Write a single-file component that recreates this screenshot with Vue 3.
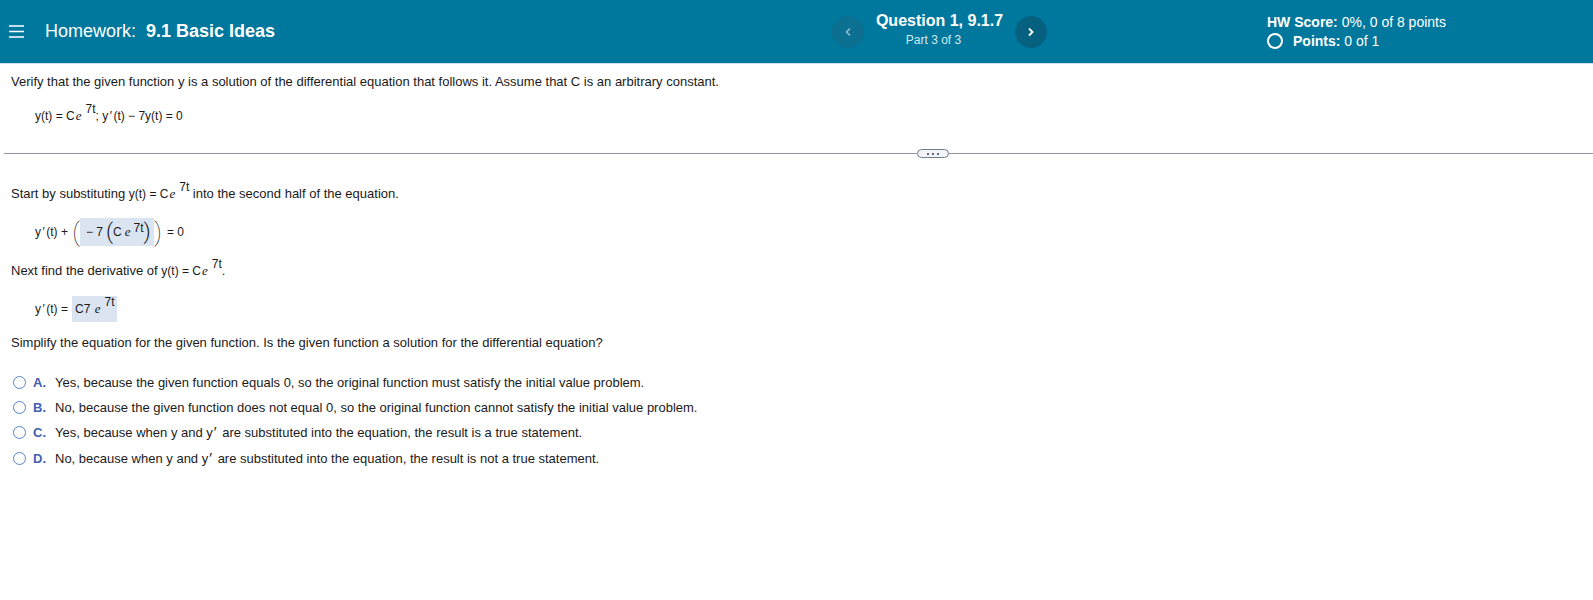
<template>
  <div class="page">
    <header class="topbar">
      <div class="left">
        <svg class="menu" width="15" height="13" viewBox="0 0 15 13">
          <path d="M0 1h15M0 6.5h15M0 12h15" stroke="#fff" stroke-width="1.4" fill="none" />
        </svg>
        <div class="hw-title">Homework: <b>9.1 Basic Ideas</b></div>
      </div>
      <div class="center">
        <button class="nav prev">
          <svg width="6" height="10" viewBox="0 0 6 10"><path d="M5 1.5L1.5 5L5 8.5" stroke="#8fbccd" stroke-width="1.6" fill="none" /></svg>
        </button>
        <div class="q-title">
          <div class="q-name">Question 1, 9.1.7</div>
          <div class="q-part">Part 3 of 3</div>
        </div>
        <button class="nav next">
          <svg width="6" height="10" viewBox="0 0 6 10"><path d="M1 1.5L4.5 5L1 8.5" stroke="#fff" stroke-width="1.8" fill="none" /></svg>
        </button>
      </div>
      <div class="score">
        <div><b>HW Score:</b> 0%, 0 of 8 points</div>
        <div class="points">
          <span class="ring"></span>
          <span><b>Points:</b> 0 of 1</span>
        </div>
      </div>
    </header>

    <section class="question">
      <p class="line first">Verify that the given function y is a solution of the differential equation that follows it. Assume that C is an arbitrary constant.</p>
      <p class="math eq1">y(t) = C<i class="e">e</i><sup>7t</sup>; y<span class="prime">′</span>(t) − 7y(t) = 0</p>
    </section>

    <div class="divider">
      <span class="rule left-rule"></span>
      <span class="pill"><i></i><i></i><i></i></span>
      <span class="rule"></span>
    </div>

    <section class="steps">
      <p class="line s1">Start by substituting <span class="m">y(t) = C<i class="e">e</i><sup>7t</sup></span> into the second half of the equation.</p>
      <div class="math s2">
        <span class="lhs">y<span class="prime">′</span>(t) +</span>
        <span class="paren outer">(</span>
        <span class="answer wide">
          <span class="minus">− 7</span>
          <span class="paren inner">(</span>
          <span>C</span>
          <i class="e ee">e</i>
          <span class="raised">7t</span>
          <span class="paren inner">)</span>
        </span>
        <span class="paren outer">)</span>
        <span class="rhs">= 0</span>
      </div>
      <p class="line s3">Next find the derivative of <span class="m">y(t) = C<i class="e">e</i><sup>7t</sup></span>.</p>
      <div class="math s4">
        <span class="lhs">y<span class="prime">′</span>(t) =</span>
        <span class="answer">C7 <i class="e">e</i><sup>7t</sup></span>
      </div>
      <p class="line s5">Simplify the equation for the given function. Is the given function a solution for the differential equation?</p>

      <ul class="choices">
        <li v-for="c in choices" :key="c.letter">
          <span class="radio"></span>
          <span class="letter">{{ c.letter }}.</span>
          <span>
            <template v-for="(part, i) in c.text.split('′')" :key="i">
              <span v-if="i > 0" class="prime big">′</span>{{ part }}
            </template>
          </span>
        </li>
      </ul>
    </section>
  </div>
</template>

<script setup>
const choices = [
  { letter: "A", text: "Yes, because the given function equals 0, so the original function must satisfy the initial value problem." },
  { letter: "B", text: "No, because the given function does not equal 0, so the original function cannot satisfy the initial value problem." },
  { letter: "C", text: "Yes, because when y and y′ are substituted into the equation, the result is a true statement." },
  { letter: "D", text: "No, because when y and y′ are substituted into the equation, the result is not a true statement." },
];
</script>

<style>
html,
body {
  margin: 0;
  background: #fff;
}
</style>

<style scoped>
.page {
  height: 600px;
  overflow: hidden;
  font-family: "Liberation Sans", Arial, sans-serif;
  font-size: 13px;
  color: #1a1a1a;
}

.topbar {
  display: flex;
  align-items: center;
  height: 64px;
  box-sizing: border-box;
  background: #00789e;
  border-bottom: 1px solid #cfe3ea;
  color: #fff;
}

.left {
  display: flex;
  align-items: center;
  width: 832px;
  padding-left: 9px;
  box-sizing: border-box;
}

.menu {
  margin-right: 21px;
}

.hw-title {
  font-size: 18px;
}

.hw-title b {
  margin-left: 5px;
}

.center {
  display: flex;
  align-items: center;
  width: 435px;
}

.nav {
  width: 32px;
  height: 32px;
  padding: 0;
  border: 0;
  border-radius: 50%;
  display: flex;
  align-items: center;
  justify-content: center;
}

.prev {
  background: #0b7091;
}

.next {
  background: #05617f;
}

.q-title {
  width: 151px;
  text-align: center;
  margin-bottom: 4px;
}

.q-name {
  font-size: 16px;
  font-weight: 700;
  line-height: 20px;
}

.q-part {
  font-size: 12px;
  line-height: 18px;
  color: #d5e8ef;
  padding-right: 12px;
}

.score {
  font-size: 14px;
  line-height: 19px;
}

.points {
  display: flex;
  align-items: center;
}

.ring {
  width: 16px;
  height: 16px;
  box-sizing: border-box;
  border: 2px solid #fff;
  border-radius: 50%;
  margin-right: 10px;
}

p {
  margin: 0;
}

.line {
  padding-left: 11px;
  line-height: 18px;
}

.first {
  margin-top: 9px;
}

.math {
  padding-left: 35px;
  line-height: 18px;
  font-size: 12px;
}

.m {
  font-size: 12px;
}

.eq1 {
  margin-top: 16px;
}

.prime {
  margin: 0 1.5px;
}

.prime.big {
  font-size: 15px;
  line-height: 0;
  margin: 0 2px 0 1px;
}

.e {
  font-family: "Liberation Serif", serif;
  font-size: 13px;
  margin-left: 1px;
}

sup {
  font-size: 12px;
  line-height: 0;
  margin-left: 4px;
  vertical-align: 7px;
}

.raised {
  font-size: 12px;
  position: relative;
  top: -4px;
  margin-left: 3px;
}

.divider {
  display: flex;
  align-items: center;
  margin: 24px 0 0 4px;
}

.rule {
  flex: 1;
  height: 1px;
  background: #8a95a5;
}

.left-rule {
  flex: 0 0 913px;
}

.pill {
  width: 32px;
  height: 9px;
  box-sizing: border-box;
  border: 1px solid #6f7d90;
  border-radius: 5px;
  background: #f2f4f7;
  display: flex;
  align-items: center;
  justify-content: center;
  gap: 3px;
}

.pill i {
  width: 2px;
  height: 2px;
  background: #5f6b7a;
}

.s1 {
  margin-top: 27px;
}

.s2 {
  margin-top: 15px;
  display: flex;
  align-items: center;
  height: 28px;
}

.lhs {
  width: 37px;
  white-space: nowrap;
}

.answer {
  display: inline-block;
  background: #dbe4f1;
  white-space: nowrap;
}

.wide {
  display: flex;
  align-items: center;
  box-sizing: border-box;
  width: 74px;
  height: 28px;
  padding-left: 6px;
}

.minus {
  width: 20px;
}

.paren {
  font-family: Roboto, sans-serif;
  font-weight: 100;
  color: #222;
}

.outer {
  font-size: 26px;
  line-height: 28px;
  width: 8px;
  display: flex;
  justify-content: center;
}

.inner {
  font-weight: 300;
  font-size: 22px;
  line-height: 24px;
}

.ee {
  margin: 0 0 0 3px;
}

.rhs {
  margin-left: 5px;
}

.s3 {
  margin-top: 16px;
}

.s4 {
  margin-top: 16px;
  display: flex;
  align-items: center;
  height: 26px;
}

.s4 .answer {
  line-height: 26px;
  height: 26px;
  width: 45px;
  box-sizing: border-box;
  padding-left: 3px;
}

.s5 {
  margin-top: 12px;
}

.choices {
  list-style: none;
  margin: 17.5px 0 0;
  padding: 0 0 0 13px;
}

.choices li {
  display: flex;
  align-items: center;
  height: 25.4px;
}

.radio {
  width: 13px;
  height: 13px;
  box-sizing: border-box;
  border: 1.5px solid #5b82c4;
  border-radius: 50%;
  margin-right: 7px;
}

.letter {
  width: 22px;
  color: #3f5fb0;
  font-weight: 700;
}
</style>
